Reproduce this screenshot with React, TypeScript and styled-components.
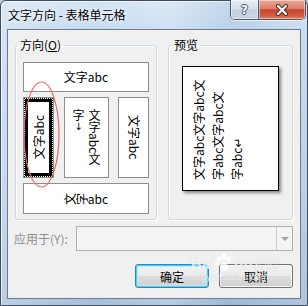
import styled, { createGlobalStyle } from "styled-components";

const GlobalStyle = createGlobalStyle`
    html, body {
        margin: 0;
        padding: 0;
        width: 308px;
        height: 306px;
        overflow: hidden;
        background: #b9cfe6;
    }
    * {
        box-sizing: border-box;
    }
    body {
        font-family: "Noto Sans CJK SC", "Microsoft YaHei", "DejaVu Sans", sans-serif;
        font-size: 12px;
        color: #000;
    }
`;

const Window = styled.div`
    position: relative;
    width: 308px;
    height: 306px;
    display: flex;
    flex-direction: column;
    padding: 0 6px 6px 6px;
    border: 1px solid #3e4d60;
    border-radius: 6px 6px 0 0;
    background:
        linear-gradient(90deg, rgba(255, 255, 255, 0.25) 0%, rgba(255, 255, 255, 0) 30%, rgba(255, 255, 255, 0.2) 55%, rgba(120, 150, 180, 0.15) 75%, rgba(255, 255, 255, 0.1) 100%),
        linear-gradient(180deg, #d3e3f3 0%, #c3d8ee 12%, #b7cde4 60%, #a6bfd9 100%);
    box-shadow: inset 1px 1px 0 rgba(255, 255, 255, 0.6);
`;

const TitleBar = styled.div`
    height: 28px;
    display: flex;
    align-items: flex-start;
    justify-content: space-between;
`;

const Title = styled.div`
    padding: 6px 0 0 1px;
    line-height: 16px;
    font-size: 12px;
    text-shadow: 0 0 6px rgba(255, 255, 255, 0.95), 0 0 3px rgba(255, 255, 255, 0.9);
`;

const Captions = styled.div`
    display: flex;
    margin: -1px -5px 0 0;
    border: 1px solid #4b5a6c;
    border-top: none;
    border-radius: 0 0 5px 5px;
    overflow: hidden;
    box-shadow: 0 1px 0 rgba(255, 255, 255, 0.6);
`;

const CaptionButton = styled.div<{ $close?: boolean }>`
    width: ${(p) => (p.$close ? 47 : 27)}px;
    height: 19px;
    display: flex;
    align-items: center;
    justify-content: center;
    border-left: ${(p) => (p.$close ? "1px solid #4b5a6c" : "none")};
    background: ${(p) =>
        p.$close
            ? "linear-gradient(180deg, #e9a99a 0%, #dc7f6c 45%, #c7452c 52%, #cf5a3f 80%, #e07e5a 100%)"
            : "linear-gradient(180deg, #e8eef5 0%, #d6e0eb 45%, #c2d0df 52%, #c9d6e4 100%)"};
    box-shadow: inset 0 0 0 1px rgba(255, 255, 255, 0.45);
`;

const HelpGlyph = styled.span`
    font-family: "DejaVu Sans", sans-serif;
    font-weight: bold;
    font-size: 12px;
    line-height: 12px;
    color: #fff;
    text-shadow: -1px 0 #4a5566, 1px 0 #4a5566, 0 -1px #4a5566, 0 1px #4a5566;
`;

const Client = styled.div`
    flex: 1;
    display: flex;
    flex-direction: column;
    background: #f0f0f0;
    border: 1px solid #687b91;
    padding: 7px 7px 10px 7px;
`;

const GroupRow = styled.div`
    display: flex;
    gap: 11px;
`;

const Group = styled.fieldset<{ $width: number; $padLeft: number; $padTop: number }>`
    width: ${(p) => p.$width}px;
    margin: 0;
    padding: ${(p) => p.$padTop}px 7px 5px ${(p) => p.$padLeft}px;
    border: 1px solid #d0dae2;
    border-radius: 3px;
    box-shadow: inset 1px 1px 0 #fff, 1px 1px 0 #fff;
    min-width: 0;
`;

const Legend = styled.legend<{ $shift: number }>`
    margin-left: ${(p) => p.$shift}px;
    padding: 0 2px;
    line-height: 16px;
    font-size: 12px;
`;

const Options = styled.div`
    width: 126px;
    display: flex;
    flex-direction: column;
    gap: 5px;
`;

const OptButton = styled.div<{ $w?: number; $h: number }>`
    width: ${(p) => (p.$w ? `${p.$w}px` : "auto")};
    height: ${(p) => p.$h}px;
    background: #fff;
    border: 1px solid #8e8e8e;
    display: flex;
    align-items: center;
    justify-content: center;
    line-height: 14px;
    white-space: nowrap;
`;

const MiddleRow = styled.div`
    display: flex;
    justify-content: space-between;
`;

const FocusFrame = styled.div`
    flex: 1;
    align-self: stretch;
    margin: 1px;
    border: 3px solid #000;
    outline: 1px dotted #000;
    display: flex;
    align-items: center;
    justify-content: center;
`;

const UpText = styled.div`
    writing-mode: vertical-rl;
    text-orientation: sideways;
    transform: rotate(180deg);
    line-height: 14px;
`;

const DownText = styled.div`
    writing-mode: vertical-rl;
    text-orientation: sideways;
    line-height: 14px;
`;

const StackText = styled.div`
    align-self: flex-start;
    margin-top: 11px;
    writing-mode: vertical-rl;
    text-orientation: mixed;
    line-height: 16px;
`;

const UprightMark = styled.span`
    text-orientation: upright;
    font-family: "DejaVu Sans", sans-serif;
    font-size: 10px;
`;

const TurnedChar = styled.span`
    display: inline-block;
    transform: rotate(-90deg);
`;

const PreviewPaper = styled.div`
    width: 97px;
    height: 125px;
    background: #fff;
    border: 1px solid #000;
    box-shadow: 2px 2px 3px rgba(0, 0, 0, 0.45);
    padding: 16px 0 0 6px;
`;

const PreviewText = styled.div`
    height: 97px;
    width: 57px;
    writing-mode: vertical-rl;
    text-orientation: sideways;
    transform: rotate(180deg);
    line-height: 19px;
    white-space: nowrap;
    text-align: start;
`;

const ApplyRow = styled.div`
    display: flex;
    align-items: center;
    margin-top: 6px;
`;

const ApplyLabel = styled.div`
    width: 62px;
    margin-left: -1px;
    color: #8d8d8d;
`;

const Combo = styled.div`
    flex: 1;
    height: 25px;
    display: flex;
    justify-content: flex-end;
    background: #f4f4f4;
    border: 1px solid #adb1b5;
`;

const ComboArrow = styled.div`
    width: 16px;
    border-left: 1px solid #c9cbcd;
    display: flex;
    align-items: center;
    justify-content: center;
    &::after {
        content: "";
        border-left: 4px solid transparent;
        border-right: 4px solid transparent;
        border-top: 4px solid #a3a3a3;
    }
`;

const ButtonRow = styled.div`
    display: flex;
    justify-content: flex-end;
    gap: 10px;
    margin-top: 13px;
`;

const DialogButton = styled.div<{ $default?: boolean }>`
    width: 74px;
    height: 24px;
    display: flex;
    align-items: center;
    justify-content: center;
    border-radius: 3px;
    border: 1px solid ${(p) => (p.$default ? "#3c7fb1" : "#707070")};
    background: linear-gradient(180deg, #f2f2f2 0%, #ebebeb 48%, #dddddd 52%, #cfcfcf 100%);
    box-shadow: ${(p) =>
        p.$default ? "inset 0 0 0 1px #48d0f6, inset 0 0 0 2px #b8ecfc" : "inset 0 0 0 1px #fcfcfc"};
`;

const Annotation = styled.svg`
    position: absolute;
    left: 0;
    top: 0;
    width: 306px;
    height: 305px;
    pointer-events: none;
`;

const Watermark = styled.div`
    position: absolute;
    left: 190px;
    top: 253px;
    display: flex;
    flex-direction: column;
    color: rgba(255, 255, 255, 0.8);
    text-shadow: 0 0 1px rgba(120, 120, 120, 0.35);
    pointer-events: none;
`;

const MarkTop = styled.div`
    display: flex;
    align-items: flex-end;
    font-family: "Liberation Sans", sans-serif;
    font-weight: bold;
    font-size: 15px;
    line-height: 16px;
`;

const MarkCn = styled.span`
    font-family: "Noto Sans CJK SC", sans-serif;
    font-weight: normal;
    font-size: 13px;
    margin-left: 1px;
`;

const MarkUrl = styled.div`
    font-family: "Liberation Sans", sans-serif;
    font-size: 9px;
    line-height: 11px;
    letter-spacing: 0.3px;
`;

function Paw() {
    return (
        <svg width="20" height="18" viewBox="0 0 20 18" fill="rgba(255,255,255,0.8)">
            <ellipse cx="5" cy="5" rx="2.3" ry="3" />
            <ellipse cx="10" cy="3" rx="2.3" ry="3" />
            <ellipse cx="15" cy="5" rx="2.3" ry="3" />
            <ellipse cx="3" cy="10" rx="2" ry="2.5" />
            <path d="M10 8 C6 8 5 14 7 16 C8.5 17 11.5 17 13 16 C15 14 14 8 10 8 Z" />
        </svg>
    );
}

function CloseIcon() {
    return (
        <svg width="14" height="12" viewBox="0 0 14 12">
            <path d="M3 2 L11 10 M11 2 L3 10" stroke="#43302b" strokeWidth="4.2" strokeLinecap="round" />
            <path d="M3 2 L11 10 M11 2 L3 10" stroke="#fff" strokeWidth="2.2" strokeLinecap="round" />
        </svg>
    );
}

export default function App() {
    return (
        <>
            <GlobalStyle />
            <Window>
                <TitleBar>
                    <Title>文字方向 - 表格单元格</Title>
                    <Captions>
                        <CaptionButton>
                            <HelpGlyph>?</HelpGlyph>
                        </CaptionButton>
                        <CaptionButton $close>
                            <CloseIcon />
                        </CaptionButton>
                    </Captions>
                </TitleBar>
                <Client>
                    <GroupRow>
                        <Group $width={142} $padLeft={7} $padTop={9}>
                            <Legend $shift={-5}>
                                方向(<u>O</u>)
                            </Legend>
                            <Options>
                                <OptButton $h={30}>文字abc</OptButton>
                                <MiddleRow>
                                    <OptButton $w={31} $h={81}>
                                        <FocusFrame>
                                            <UpText>文字abc</UpText>
                                        </FocusFrame>
                                    </OptButton>
                                    <OptButton $w={45} $h={81}>
                                        <StackText>
                                            文字abc文
                                            <br />
                                            字<UprightMark>↓</UprightMark>
                                        </StackText>
                                    </OptButton>
                                    <OptButton $w={31} $h={81}>
                                        <DownText>文字abc</DownText>
                                    </OptButton>
                                </MiddleRow>
                                <OptButton $h={31}>
                                    <TurnedChar>文</TurnedChar>
                                    <TurnedChar>字</TurnedChar>abc
                                </OptButton>
                            </Options>
                        </Group>
                        <Group $width={125} $padLeft={13} $padTop={13}>
                            <Legend $shift={-10}>预览</Legend>
                            <PreviewPaper>
                                <PreviewText>
                                    文字abc文字abc文
                                    <br />
                                    字abc文字abc文
                                    <br />
                                    字abc↵
                                </PreviewText>
                            </PreviewPaper>
                        </Group>
                    </GroupRow>
                    <ApplyRow>
                        <ApplyLabel>应用于(Y):</ApplyLabel>
                        <Combo>
                            <ComboArrow />
                        </Combo>
                    </ApplyRow>
                    <ButtonRow>
                        <DialogButton $default>确定</DialogButton>
                        <DialogButton>取消</DialogButton>
                    </ButtonRow>
                </Client>
                <Watermark>
                    <MarkTop>
                        Bai
                        <Paw />
                        du
                        <MarkCn>经验</MarkCn>
                    </MarkTop>
                    <MarkUrl>jingyan.baidu.com</MarkUrl>
                </Watermark>
                <Annotation viewBox="0 0 306 305">
                    <ellipse cx="40.5" cy="133.5" rx="17.5" ry="52.5" fill="none" stroke="#e46b6b" strokeWidth="1.2" />
                </Annotation>
            </Window>
        </>
    );
}
